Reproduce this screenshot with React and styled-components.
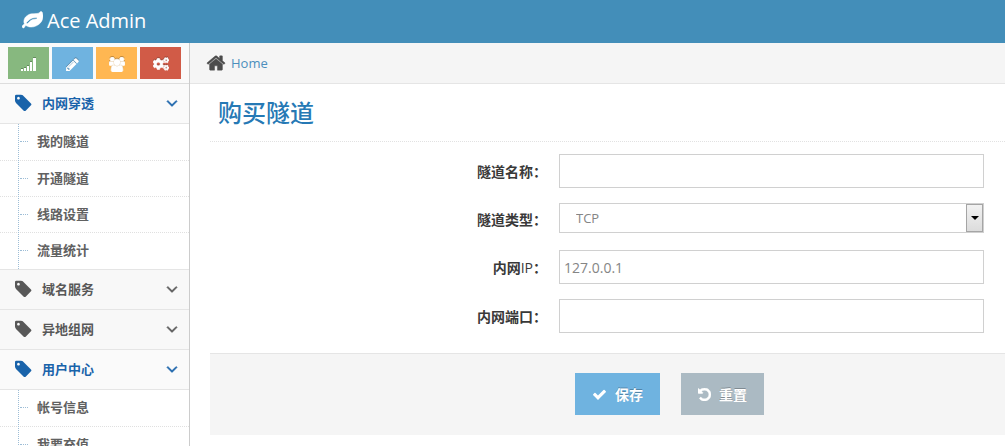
import React, { useState } from "react";
import { FaCogs } from "react-icons/fa";
import styled, { createGlobalStyle } from "styled-components";

const menu = [
    {
        title: "内网穿透",
        open: true,
        items: ["我的隧道", "开通隧道", "线路设置", "流量统计"],
    },
    { title: "域名服务", items: [] },
    { title: "异地组网", items: [] },
    {
        title: "用户中心",
        open: true,
        items: ["帐号信息", "我要充值"],
    },
];

export default function App() {
    return (
        <>
            <GlobalStyle />
            <Page>
                <Navbar>
                    <Brand href="#">
                        <LeafIcon />
                        Ace Admin
                    </Brand>
                </Navbar>
                <Container>
                    <Sidebar />
                    <Main>
                        <Breadcrumbs>
                            <HomeIcon />
                            <a href="#">Home</a>
                        </Breadcrumbs>
                        <Content>
                            <PageTitle>购买隧道</PageTitle>
                            <TunnelForm />
                        </Content>
                    </Main>
                </Container>
            </Page>
        </>
    );
}

function Sidebar() {
    return (
        <Aside>
            <Shortcuts>
                <Shortcut $color="#87b87f" aria-label="signal"><SignalIcon /></Shortcut>
                <Shortcut $color="#6fb3e0" aria-label="edit"><PencilIcon /></Shortcut>
                <Shortcut $color="#ffb752" aria-label="users"><GroupIcon /></Shortcut>
                <Shortcut $color="#d15b47" aria-label="settings">
                    <FaCogs size={16} stroke="#fff" strokeWidth={24} />
                </Shortcut>
            </Shortcuts>
            <nav>
                {menu.map((group) => (
                    <div key={group.title}>
                        <MenuLink href="#" $open={group.open}>
                            <TagIcon />
                            <span>{group.title}</span>
                            <AngleIcon />
                        </MenuLink>
                        {group.open && (
                            <Submenu>
                                {group.items.map((item) => (
                                    <li key={item}>
                                        <SubLink href="#">{item}</SubLink>
                                    </li>
                                ))}
                            </Submenu>
                        )}
                    </div>
                ))}
            </nav>
        </Aside>
    );
}

function TunnelForm() {
    const [ip, setIp] = useState("127.0.0.1");

    return (
        <form onSubmit={(e) => e.preventDefault()}>
            <Fields>
                <Row>
                    <Label htmlFor="name">隧道名称：</Label>
                    <Input id="name" type="text" />
                </Row>
                <Row>
                    <Label htmlFor="type">隧道类型：</Label>
                    <SelectWrap>
                        <Select id="type">
                            <option>TCP</option>
                            <option>UDP</option>
                        </Select>
                        <SelectArrow />
                    </SelectWrap>
                </Row>
                <Row>
                    <Label htmlFor="ip">内网<Latin>IP</Latin>：</Label>
                    <Input
                        id="ip"
                        type="text"
                        value={ip}
                        onChange={(e) => setIp(e.target.value)}
                    />
                </Row>
                <Row>
                    <Label htmlFor="port">内网端口：</Label>
                    <Input id="port" type="text" />
                </Row>
            </Fields>
            <Actions>
                <Button type="submit" $color="#6fb3e0">
                    <CheckIcon />
                    保存
                </Button>
                <Button type="reset" $color="#abbac3">
                    <UndoIcon />
                    重置
                </Button>
            </Actions>
        </form>
    );
}

const LeafIcon = () => (
    <svg width="21" height="21" viewBox="0 0 1792 1792" fill="currentColor">
        <path d="M1280 704q0-26-19-45t-45-19q-172 0-318 49.500t-259.500 134-235.500 219.500q-19 21-19 45 0 26 19 45t45 19q24 0 45-19 27-24 74-71t67-66q137-124 268.500-176t313.500-52q26 0 45-19t19-45zm512-198q0 95-20 193-46 224-184.500 383t-357.500 268q-214 108-438 108-148 0-286-47-15-5-88-42t-96-37q-16 0-39.500 32t-45 70-52.500 70-60 32q-43 0-63.500-17.500t-45.500-59.500q-2-4-6-11t-5.500-10-3-9.500-1.500-13.500q0-35 31-73.500t68-65.500 68-56 31-48q0-4-14-38t-16-44q-9-51-9-104 0-115 43.500-220t119-184.500 170.500-139 204-95.500q55-18 145-25.500t179.500-9 178.500-6 163.500-24 113.500-56.500l29.500-29.500 29.500-28 27-20 36.500-16 43.500-4.500q39 0 70.500 46t47.500 112 24 124 8 96z" stroke="currentColor" strokeWidth="40" />
    </svg>
);

const PencilIcon = () => (
    <svg width="15" height="15" viewBox="0 0 1792 1792" fill="currentColor">
        <path d="M491 1536l91-91-235-235-91 91v107h128v128h107zm523-928q0-22-22-22-10 0-17 7l-542 542q-7 7-7 17 0 22 22 22 10 0 17-7l542-542q7-7 7-17zm-54-192l416 416-832 832h-416v-416zm683 96q0 53-37 90l-166 166-416-416 166-165q36-38 90-38 53 0 91 38l235 234q37 39 37 91z" />
    </svg>
);

const TagIcon = () => (
    <svg width="18" height="18" viewBox="128 64 1664 1664" fill="currentColor">
        <path d="M576 448q0-53-37.500-90.500t-90.500-37.500-90.500 37.500-37.500 90.500 37.500 90.500 90.500 37.500 90.500-37.500 37.500-90.500zm1067 576q0 53-37 90l-491 492q-39 37-91 37-53 0-90-37l-715-716q-38-37-64.500-101t-26.500-117v-416q0-52 38-90t90-38h416q53 0 117 26.500t102 64.500l715 714q37 39 37 91z" />
    </svg>
);

const AngleIcon = () => (
    <svg width="18" height="18" viewBox="0 0 1792 1792" fill="currentColor">
        <path d="M1395 736q0 13-10 23l-466 466q-10 10-23 10t-23-10l-466-466q-10-10-10-23t10-23l50-50q10-10 23-10t23 10l393 393 393-393q10-10 23-10t23 10l50 50q10 10 10 23z" stroke="currentColor" strokeWidth="60" />
    </svg>
);

const HomeIcon = () => (
    <svg width="20" height="20" viewBox="0 0 1792 1792" fill="currentColor">
        <path d="M1472 992v480q0 26-19 45t-45 19h-384v-384h-256v384h-384q-26 0-45-19t-19-45v-480q0-1 .5-3t.5-3l575-474 575 474q1 2 1 6zm223-69l-62 74q-8 9-21 11h-3q-13 0-21-7l-692-577-692 577q-12 8-24 7-13-2-21-11l-62-74q-8-10-7-23.500t11-21.500l719-599q32-26 76-26t76 26l244 204v-195q0-14 9-23t23-9h192q14 0 23 9t9 23v408l219 182q10 8 11 21.500t-7 23.500z" stroke="currentColor" strokeWidth="40" />
    </svg>
);

const SignalIcon = () => (
    <svg width="15" height="13" viewBox="0 0 15 13" fill="currentColor">
        <rect x="0" y="11" width="2" height="2" />
        <rect x="3" y="10" width="2" height="3" />
        <rect x="6" y="8" width="2" height="5" />
        <rect x="9" y="4" width="2" height="9" />
        <rect x="12" y="0" width="3" height="13" />
    </svg>
);

const GroupIcon = () => (
    <svg width="16" height="15" viewBox="0 0 1920 1792" fill="currentColor">
        <path d="M593 896q-162 5-265 128h-134q-82 0-138-40.500t-56-118.500q0-353 124-353 6 0 43.500 21t97.500 42.500 119 21.500q67 0 133-23-5 37-5 66 0 139 81 256zm1071 637q0 120-73 189.500t-194 69.500h-874q-121 0-194-69.500t-73-189.500q0-53 3.500-103.500t14-109 26.500-108.500 43-97.500 62-81 85.500-53.500 111.500-20q10 0 43 21.500t73 48 107 48 135 21.500 135-21.500 107-48 73-48 43-21.500q61 0 111.500 20t85.500 53.500 62 81 43 97.500 26.500 108.500 14 109 3.500 103.500zm-1024-1277q0 106-75 181t-181 75-181-75-75-181 75-181 181-75 181 75 75 181zm704 384q0 159-112.500 271.500t-271.500 112.500-271.500-112.500-112.500-271.500 112.500-271.500 271.500-112.500 271.500 112.500 112.500 271.500zm576 225q0 78-56 118.500t-138 40.500h-134q-103-123-265-128 81-117 81-256 0-29-5-66 66 23 133 23 59 0 119-21.500t97.500-42.500 43.500-21q124 0 124 353zm-128-609q0 106-75 181t-181 75-181-75-75-181 75-181 181-75 181 75 75 181z" stroke="currentColor" strokeWidth="90" />
    </svg>
);

const CheckIcon = () => (
    <svg width="15" height="15" viewBox="0 0 1792 1792" fill="currentColor">
        <path d="M1671 566q0 40-28 68l-724 724-136 136q-28 28-68 28t-68-28l-136-136-362-362q-28-28-28-68t28-68l136-136q28-28 68-28t68 28l294 295 656-657q28-28 68-28t68 28l136 136q28 28 28 68z" />
    </svg>
);

const UndoIcon = () => (
    <svg width="13" height="13" viewBox="128 128 1536 1536" fill="currentColor">
        <path d="M1664 896q0 156-61 298t-164 245-245 164-298 61q-172 0-327-72.500t-264-204.500q-7-10-6.500-22.500t8.500-20.500l137-138q10-9 25-9 16 2 23 12 73 95 179 147t225 52q104 0 198.500-40.500t163.500-109.500 109.500-163.500 40.500-198.500-40.500-198.500-109.500-163.500-163.500-109.500-198.500-40.500q-98 0-188 35.500t-160 101.500l137 138q31 30 14 69-17 40-59 40h-448q-26 0-45-19t-19-45v-448q0-42 40-59 39-17 69 14l130 129q107-101 244.500-156.500t284.500-55.500q156 0 298 61t245 164 164 245 61 298z" stroke="currentColor" strokeWidth="60" />
    </svg>
);

const GlobalStyle = createGlobalStyle`
    * {
        box-sizing: border-box;
    }

    body {
        margin: 0;
        background: #fff;
        color: #393939;
        font-family: "Open Sans", "Noto Sans CJK SC", sans-serif;
        font-size: 13px;
        line-height: 20px;
    }

    a {
        text-decoration: none;
    }

    svg {
        flex: none;
    }
`;

const Page = styled.div`
    display: flex;
    flex-direction: column;
    height: 100vh;
    overflow: hidden;
`;

const Navbar = styled.header`
    display: flex;
    flex: none;
    padding: 0 22px;
    background: #438eb9;
`;

const Brand = styled.a`
    display: flex;
    align-items: center;
    gap: 4px;
    height: 41px;
    margin-bottom: 2px;
    color: #fff;
    font-size: 20px;
`;

const Container = styled.div`
    display: flex;
    flex: 1;
    min-height: 0;
`;

const Aside = styled.aside`
    flex: none;
    width: 190px;
    overflow: hidden;
    border-right: 1px solid #ccc;
`;

const Shortcuts = styled.div`
    display: flex;
    gap: 3px;
    padding: 4px 8px;
    border-bottom: 1px solid #ddd;
    background: #fafafa;
`;

const Shortcut = styled.button`
    display: flex;
    flex: 1;
    align-items: center;
    justify-content: center;
    height: 32px;
    padding: 2px 0 0;
    border: 0;
    background: ${(props) => props.$color};
    color: #fff;
    cursor: pointer;

    svg {
        filter: drop-shadow(0 -1px 0 rgba(0, 0, 0, 0.25));
    }
`;

const MenuLink = styled.a`
    display: flex;
    align-items: center;
    height: 40px;
    padding: 0 8px 1px 15px;
    border-bottom: 1px solid #e5e5e5;
    background: ${(props) => (props.$open ? "#fafafa" : "#f8f8f8")};
    color: ${(props) => (props.$open ? "#1963aa" : "#585858")};
    font-weight: 700;

    span {
        flex: 1;
        margin-left: 9px;
    }
`;

const Submenu = styled.ul`
    position: relative;
    margin: 0;
    padding: 0;
    border-bottom: 1px solid #e5e5e5;
    list-style: none;

    li + li {
        border-top: 1px dotted #e0e0e0;
    }

    &::before {
        content: "";
        position: absolute;
        top: 0;
        bottom: 0;
        left: 18px;
        border-left: 1px dotted #9dbdd6;
    }
`;

const SubLink = styled.a`
    display: flex;
    align-items: center;
    gap: 9px;
    padding: 7px 0 8px 20px;
    color: #616161;
    font-weight: 700;

    &::before {
        content: "";
        width: 8px;
        border-top: 1px dotted #9dbdd6;
    }

    li:first-child &,
    li:last-child & {
        padding-bottom: 9px;
    }
`;

const Main = styled.main`
    flex: 1;
    min-width: 0;
`;

const Breadcrumbs = styled.div`
    display: flex;
    align-items: center;
    gap: 5px;
    height: 41px;
    padding: 0 16px;
    border-bottom: 1px solid #e5e5e5;
    background: #f5f5f5;
    color: #4c4c4c;

    a {
        color: #4c8fbd;
    }
`;

const Content = styled.div`
    padding: 8px 0 0 20px;
`;

const PageTitle = styled.h1`
    margin: 0;
    padding: 1px 8px 8px;
    border-bottom: 1px dotted #e2e2e2;
    color: #2679b5;
    font-size: 24px;
    font-weight: 500;
    line-height: 40px;
`;

const Fields = styled.div`
    display: grid;
    gap: 15px;
    padding: 12px 21px 20px 0;
`;

const Row = styled.div`
    display: grid;
    grid-template-columns: 337fr 425fr;
    align-items: center;
    gap: 12px;
`;

const Label = styled.label`
    padding-top: 1px;
    font-size: 14px;
    font-weight: 700;
    text-align: right;
`;

const Latin = styled.span`
    font-weight: 400;
`;

const Input = styled.input`
    width: 100%;
    height: 34px;
    padding: 5px 4px;
    border: 1px solid #d0d0d0;
    background: #fff;
    color: #858585;
    font-family: inherit;
    font-size: 14px;
`;

const SelectWrap = styled.div`
    position: relative;
    display: flex;
    margin-bottom: 2px;
`;

const Select = styled.select`
    width: 100%;
    height: 30px;
    padding: 0 16px;
    border: 1px solid #d0d0d0;
    border-radius: 0;
    appearance: none;
    background: #fff;
    color: #858585;
    font-family: inherit;
    font-size: 13px;
`;

const SelectArrow = styled.span`
    position: absolute;
    top: 1px;
    right: 1px;
    bottom: 1px;
    display: flex;
    align-items: center;
    justify-content: center;
    width: 17px;
    border: 1px solid #a5a5a5;
    background: linear-gradient(#f2f2f2, #dcdcdc);
    pointer-events: none;

    &::after {
        content: "";
        border: 4px solid transparent;
        border-top-color: #000;
        border-bottom: 0;
    }
`;

const Actions = styled.div`
    display: flex;
    gap: 21px;
    padding: 19px 0 20px 45.9%;
    border-top: 1px solid #e5e5e5;
    background: #f5f5f5;
`;

const Button = styled.button`
    display: flex;
    align-items: center;
    gap: 8px;
    height: 42px;
    padding: 0 17px;
    border: 0;
    background: ${(props) => props.$color};
    color: #fff;
    font-family: inherit;
    font-size: 14px;
    font-weight: 700;
    text-shadow: 0 -1px 0 rgba(0, 0, 0, 0.25);
    cursor: pointer;
`;
